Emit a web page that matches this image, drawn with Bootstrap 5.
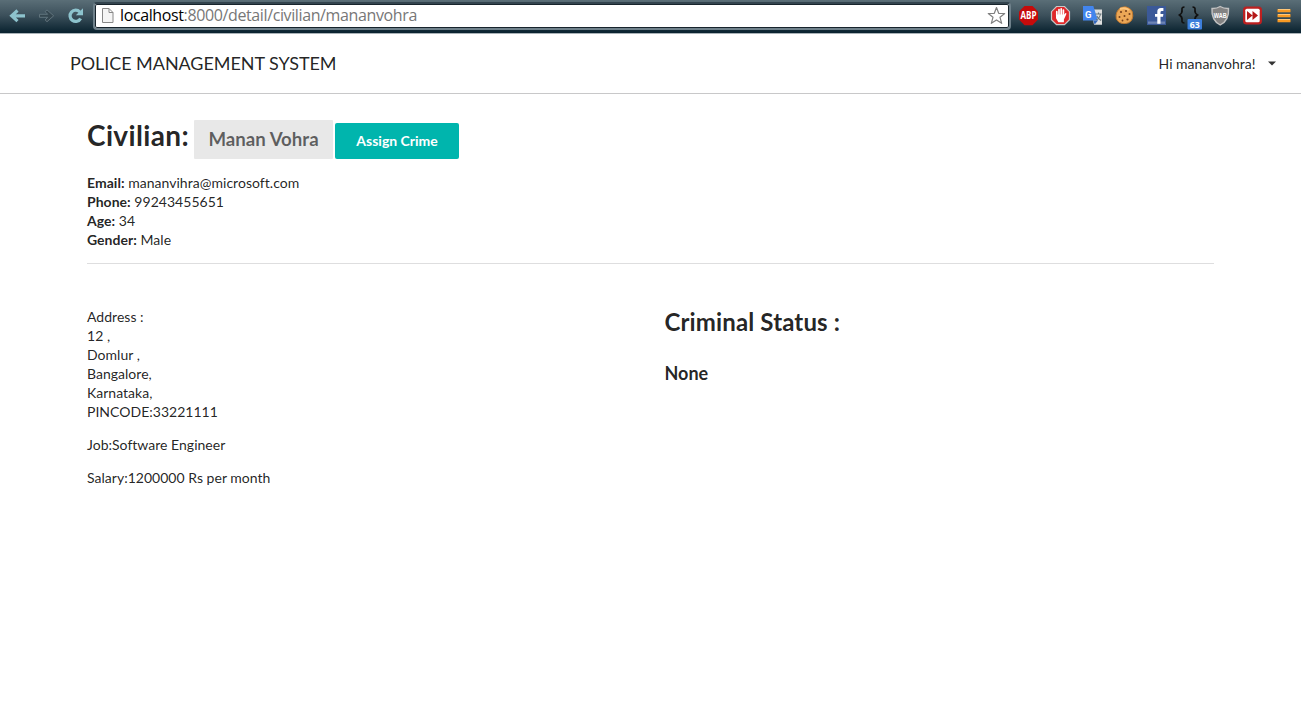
<!DOCTYPE html>
<html lang="en">
<head>
<meta charset="utf-8">
<title>Police Management System</title>
<link href="https://cdn.jsdelivr.net/npm/bootstrap@5.3.0/dist/css/bootstrap.min.css" rel="stylesheet">
<style>
body{font-family:Lato,"Liberation Sans",sans-serif;font-size:14px;line-height:19px;color:rgba(0,0,0,.87);min-height:717px;background:#fff}
.browser-bar{height:34px;background:linear-gradient(#5a6e77 0,#3c505b 45%,#0b2431 94%,#0b2431 97%,#aab3b8 97%)}
.browser-bar svg{display:block;flex:none}
.nav-icons{width:93px}
.omnibox{width:918px;height:28px;margin-top:2px;background:#fff;border:2px solid #6f818b;border-top-color:#33444e;border-radius:4px;box-shadow:inset 0 0 0 1px #17242c}
.address{font:16px/22px "Open Sans","Noto Sans",sans-serif;color:#777;white-space:nowrap;letter-spacing:-.38px}
.address b{font-weight:400;color:#000}
.site-nav{height:60px;border-bottom:1px solid #c8c8c9;padding:0 25.5px 0 70px}
.site-title{font-size:18px;line-height:24px;letter-spacing:-.06px;margin-bottom:2px}
.person{padding:0 87px}
h1,h2,h3{font-weight:700;margin:0}
h1{font-size:28px;line-height:36px;margin-top:-3px;letter-spacing:.36px}
h2{font-size:24px;line-height:31px;margin-top:-1px;letter-spacing:.14px}
h3{font-size:18px;line-height:23px}
.heading-line{margin-top:26px;height:39px}
.name-label{width:139px;height:39px;background:#e8e8e8;color:rgba(0,0,0,.6);font-weight:700;font-size:18.67px;line-height:39px;border-radius:1px;margin:0 2px 0 5px}
.btn-assign{width:124px;height:36px;padding:0;margin-top:3px;border:0;border-radius:2px;background:#00b5ad;color:#fff;font-weight:700;font-size:14px;line-height:36px}
.facts{margin-top:14px;padding-bottom:14px;border-bottom:1px solid #dededf;letter-spacing:.03px}
.details{margin-top:43px}
.left-half{width:577.5px;letter-spacing:.02px}
</style>
</head>
<body>
<header class="browser-bar d-flex align-items-start">
  <svg class="nav-icons" height="33" viewBox="0 0 93 33">
    <path d="M25 15.8H12M17.5 10.5l-5.8 5.3 5.8 5.3" fill="none" stroke="#8dc3cd" stroke-width="3.2"/>
    <path d="M39.500 14.300h8.200l-2.600-2.600 1.900-1.800 6.700 5.900-6.700 5.900-1.900-1.800 2.600-2.600h-8.200z" fill="#34464f" stroke="#60737c"/>
    <path d="M80.600 18.400A5.600 5.600 0 1 1 79.800 12" fill="none" stroke="#8dc3cd" stroke-width="3.200"/>
    <path d="M83 8.200v7.100h-7.200z" fill="#8dc3cd"/>
  </svg>
  <div class="omnibox d-flex">
    <svg width="25" height="24" viewBox="95 4 25 24"><path d="M102.500 8.500h6.500l4 4v10h-10.500zM109 8.500v4h4" fill="#f5f5f5" stroke="#888"/></svg>
    <div class="address flex-grow-1"><b>localhost</b>:8000/detail/civilian/mananvohra</div>
    <svg width="24" height="24" viewBox="985 4 24 24"><path d="M996.500 7.500l2.200 5.800 6 .2-4.700 3.800 1.700 6-5.200-3.400-5.200 3.400 1.700-6-4.700-3.800 6-.2z" fill="#fff" stroke="#808080" stroke-width="1.200" stroke-linejoin="round"/></svg>
  </div>
  <div class="d-flex" style="margin-left:2px">
    <svg width="32" height="33"><path d="M11.500 6h8l5.500 5.600v8l-5.500 5.600h-8L6 19.600v-8z" fill="#c60b0b"/><text x="15.500" y="19.200" text-anchor="middle" textLength="16" lengthAdjust="spacingAndGlyphs" font-family="Open Sans" font-size="10" font-weight="700" fill="#fff">ABP</text></svg>
    <svg width="32" height="33"><path d="M11.500 6.500h8l5 5.200v8l-5 5h-8l-5-5v-8z" fill="#e0282a" stroke="#c8c8c8" stroke-width="1.200"/><path d="M11.800 16v-4.300M14 15V9.500M16.200 15V8.900M18.400 15v-5" stroke="#fff" stroke-width="1.700" stroke-linecap="round"/><path d="M11 14.500h8.200l1.300-1.600q1.300 0 .8 1.400l-2.400 5.300v2.600h-5.500l-2.400-4z" fill="#fff"/></svg>
    <svg width="32" height="33"><path d="M14 9.500h11v15.300H17z" fill="#dedfdf"/><path d="M6 6h10.300l4.700 14.500H6z" fill="#4285ed"/><path d="M16.200 20.500H21l-3.300 4z" fill="#3369bd"/><path d="M18.500 14h6M21.500 12.500V14M23.500 14c-.6 3-2.300 5-4.500 6M19.800 16c1 2 2.200 3.300 4.300 4.500" fill="none" stroke="#68767c" stroke-width="1.100"/><text x="8" y="17.500" font-family="Roboto" font-size="9.500" font-weight="700" fill="#fff">G</text></svg>
    <svg width="32" height="33"><path d="M12 7.500q5-2 9 1.200 3.200 2.500 2.800 7.300-.6 7-7.300 7.500-7 .7-9.200-5Q6 11.500 12 7.500z" fill="#eba756" stroke="#c07a30"/><path d="M11 9q5-2 9 1" fill="none" stroke="#ffc67d" stroke-width="2"/><g fill="#75401b"><circle cx="12" cy="12" r="1.100"/><circle cx="17" cy="11" r="1"/><circle cx="20.500" cy="14" r="1"/><circle cx="15.500" cy="16" r="1"/><circle cx="10.500" cy="17" r="1"/><circle cx="18.500" cy="19.500" r="1.100"/><circle cx="13.500" cy="20.500" r=".9"/></g></svg>
    <svg width="32" height="33"><path d="M6 6h19v19H6z" fill="#3b5998"/><path d="M7 21.500h17v2.300H7z" fill="#6d84b4"/><path d="M16.300 23.800v-7H14v-2.900h2.300v-2.200q0-3.700 3.700-3.700h2.400v3h-1.500q-1.400 0-1.400 1.300v1.600h2.900l-.4 2.900h-2.500v7z" fill="#fff"/></svg>
    <svg width="32" height="33"><path d="M11.500 7q-3 0-2.500 3t-2.500 5q3 2 2.500 5t2.500 3M19.500 7q3 0 2.500 3t2.500 5q-3 2-2.500 5" fill="none" stroke="#111" stroke-width="1.700"/><rect x="14.500" y="19" width="14.500" height="10.500" rx="1" fill="#3c7fdc"/><text x="21.700" y="27.700" text-anchor="middle" textLength="10" lengthAdjust="spacingAndGlyphs" font-family="Open Sans" font-size="9.500" font-weight="700" fill="#fff">63</text></svg>
    <svg width="32" height="33"><path d="M15.200 6.500q3.600 2.200 8.300 2c.6 8-2 13.300-8.300 16.500C9 21.800 6.400 16.500 7 8.500q4.700.2 8.200-2z" fill="#838383" stroke="#c3c3c3" stroke-width="1.400"/><text x="15.200" y="18" text-anchor="middle" textLength="13" lengthAdjust="spacingAndGlyphs" font-family="Liberation Sans" font-size="8" font-weight="700" fill="#fff">WAB</text></svg>
    <svg width="32" height="33"><rect x="6" y="6.500" width="19" height="18" rx="3.500" fill="#bd2020"/><rect x="8.300" y="8.700" width="14.400" height="13.600" rx="1.500" fill="#fff"/><path d="M10 11l5.500 4.500L10 20zM15.500 11l5.500 4.500-5.500 4.500z" fill="#b51818"/></svg>
    <svg width="32" height="33"><g fill="#f79a24"><rect x="8.500" y="9" width="13" height="3.200" rx=".5"/><rect x="8.500" y="14" width="13" height="3.200" rx=".5"/><rect x="8.500" y="19" width="13" height="3.200" rx=".5"/></g><path d="M9 9.500h12M9 14.500h12M9 19.500h12" stroke="#ffc677"/></svg>
  </div>
</header>
<nav class="site-nav d-flex align-items-center justify-content-between">
  <div class="site-title">POLICE MANAGEMENT SYSTEM</div>
  <div class="d-flex align-items-center"><span>Hi mananvohra!</span><svg width="8" height="5" style="margin-left:12px"><path d="M0 .5h8l-4 4z" fill="#333"/></svg></div>
</nav>
<main class="person">
  <div class="heading-line d-flex">
    <h1>Civilian:</h1><span class="name-label text-center">Manan Vohra</span><button class="btn btn-assign" type="button">Assign Crime</button>
  </div>
  <div class="facts">
    <b>Email:</b> mananvihra@microsoft.com<br><b>Phone:</b> 99243455651<br><b>Age:</b> 34<br><b>Gender:</b> Male
  </div>
  <div class="details d-flex">
    <div class="left-half">
      <p class="mb-0">Address :<br>12 ,<br>Domlur ,<br>Bangalore,<br>Karnataka,<br>PINCODE:33221111</p>
      <p style="margin:14px 0">Job:Software Engineer</p>
      <p class="mb-0">Salary:1200000 Rs per month</p>
    </div>
    <div><h2>Criminal Status :</h2><h3 style="margin-top:25px">None</h3></div>
  </div>
</main>
<script src="https://cdn.jsdelivr.net/npm/bootstrap@5.3.0/dist/js/bootstrap.bundle.min.js"></script>
</body>
</html>
